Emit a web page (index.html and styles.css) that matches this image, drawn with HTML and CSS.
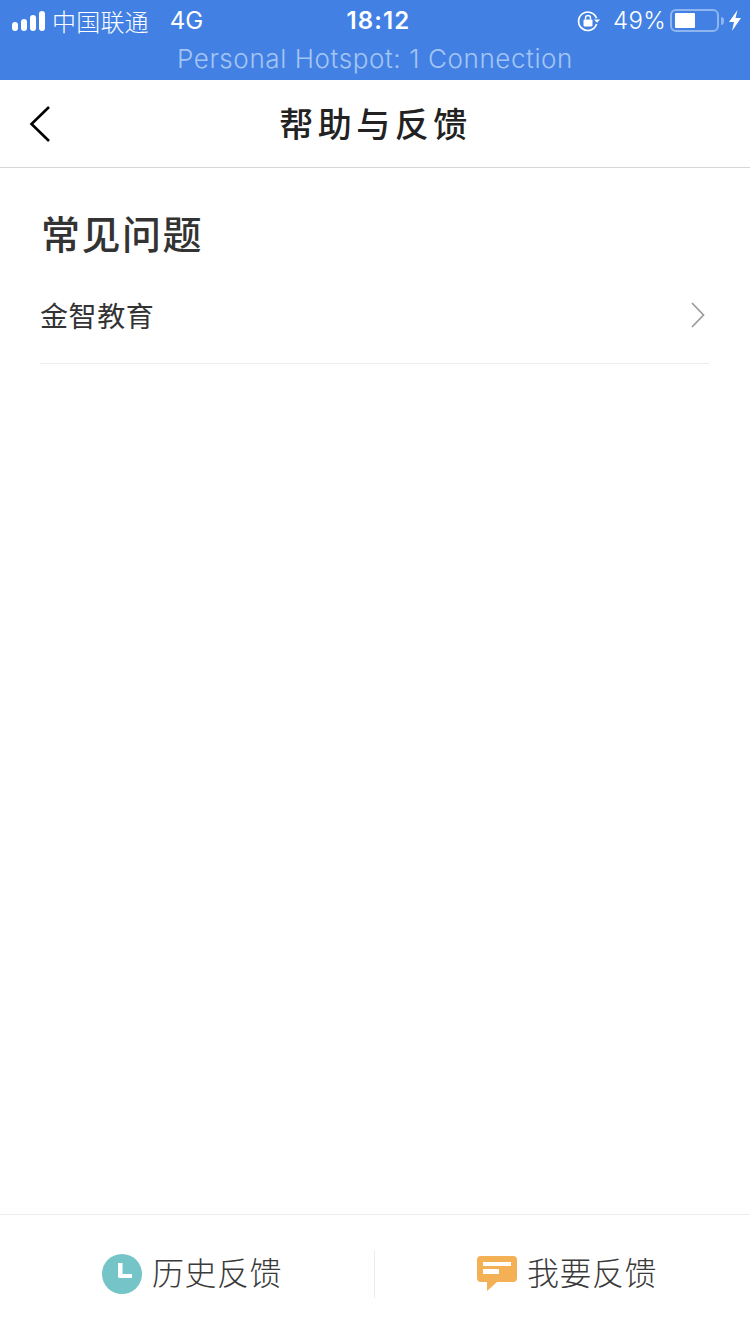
FILE: index.html
```html
<!DOCTYPE html>
<html lang="zh-CN">
<head>
<meta charset="utf-8">
<title>帮助与反馈</title>
<link rel="stylesheet" href="styles.css">
</head>
<body>
<div class="page">
  <header class="top">
    <div class="status">
      <div class="status-left">
        <div class="signal"><i class="b1"></i><i class="b2"></i><i class="b3"></i><i class="b4"></i></div>
        <span class="carrier">中国联通</span>
        <span class="net">4G</span>
      </div>
      <div class="time">18:12</div>
      <div class="status-right">
        <svg class="lock" width="24" height="22" viewBox="0 0 24 22">
          <path d="M19.500 8.200A9.200 9.200 0 1 0 19.600 14" fill="none" stroke="#fff" stroke-width="1.700"/>
          <path d="M17 9.500h6l-3 3.200z" fill="#fff"/>
          <rect x="6.500" y="9.500" width="9" height="7" rx="1" fill="#fff"/>
          <path d="M8.500 9.500V8a2.500 2.500 0 0 1 5 0v1.500" fill="none" stroke="#fff" stroke-width="1.400"/>
        </svg>
        <span class="pct">49%</span>
        <div class="battery"><div class="battery-fill"></div></div>
        <div class="battery-cap"></div>
        <svg class="bolt" width="12" height="21" viewBox="0 0 12 21"><path d="M8.500 0 0 12h5L3 21l9-13H6.500z" fill="#fff"/></svg>
      </div>
    </div>
    <div class="hotspot">Personal Hotspot: 1 Connection</div>
  </header>

  <nav class="nav">
    <svg class="back" width="24" height="38" viewBox="0 0 24 38"><path d="M21 2 3.500 19 21 36" fill="none" stroke="#000" stroke-width="2.600"/></svg>
    <h1 class="title">帮助与反馈</h1>
  </nav>

  <main class="content">
    <h2 class="heading">常见问题</h2>
    <div class="row">
      <span class="row-label">金智教育</span>
      <svg class="chev" width="16" height="26" viewBox="0 0 16 26"><path d="M3 1 14.500 13 3 25" fill="none" stroke="#9a9a9a" stroke-width="1.700"/></svg>
    </div>
  </main>

  <footer class="footer">
    <div class="action action-first">
      <svg width="40" height="40" viewBox="0 0 40 40"><circle cx="20" cy="20" r="20" fill="#75c5c8"/><path d="M16 9h4.500v11H30v4H17.500a1.500 1.500 0 0 1-1.500-1.500z" fill="#fff"/></svg>
      <span class="action-label">历史反馈</span>
    </div>
    <div class="action action-second">
      <svg width="40" height="36" viewBox="0 0 40 36"><path d="M4 0h32a4 4 0 0 1 4 4v18a4 4 0 0 1-4 4H20L10 35v-9H4a4 4 0 0 1-4-4V4a4 4 0 0 1 4-4z" fill="#f4b054"/><rect x="6" y="6" width="28" height="4" fill="#fff"/><rect x="6" y="13" width="16" height="5" fill="#fff"/></svg>
      <span class="action-label">我要反馈</span>
    </div>
  </footer>
</div>
</body>
</html>
```

FILE: styles.css
```css
* { box-sizing: border-box; }
html, body { margin: 0; padding: 0; background: #fff; }
body { font-family: "Liberation Sans", "Noto Sans CJK SC", sans-serif; }
.page { width: 750px; height: 1334px; display: flex; flex-direction: column; overflow: hidden; }

.top { background: #4281e3; height: 80px; flex: none; }
.status { height: 40px; padding: 1px 9px 0 12px; display: grid; grid-template-columns: 1fr auto 1fr; align-items: center; color: #fff; font-family: Inter, "Noto Sans CJK SC", sans-serif; }
.status-left { display: flex; align-items: center; }
.signal { display: flex; align-items: flex-end; gap: 3px; width: 33px; height: 20px; }
.signal i { display: block; width: 6px; background: #fff; border-radius: 3px; }
.b1 { height: 9px; } .b2 { height: 12px; } .b3 { height: 16px; } .b4 { height: 20px; }
.carrier { margin-left: 7px; font-size: 24px; font-family: "Noto Sans CJK SC", sans-serif; font-weight: 300; letter-spacing: 0.200px; }
.net { margin-left: 21px; font-size: 24px; font-weight: 400; }
.time { font-size: 24px; font-weight: 600; letter-spacing: 1.100px; padding-left: 4px; }
.status-right { display: flex; align-items: center; justify-content: flex-end; }
.lock { margin-right: 12px; }
.pct { font-size: 24px; font-weight: 300; margin-right: 4px; letter-spacing: 0.300px; }
.battery { width: 49px; height: 23px; border: 2px solid #8fb5ee; border-radius: 6px; padding: 2px; }
.battery-fill { width: 20px; height: 15px; background: #fff; border-radius: 1px; margin: 0 0 0 1px; }
.battery-cap { width: 3px; height: 8px; margin: 0 5px 0 2px; background: #8fb5ee; border-radius: 0 4px 4px 0; }
.hotspot { height: 40px; display: flex; align-items: center; justify-content: center; font-family: Inter, sans-serif; font-size: 26px; font-weight: 300; color: #a5c5f3; padding-bottom: 3px; letter-spacing: 0.600px; }

.nav { height: 88px; flex: none; position: relative; display: flex; align-items: center; justify-content: center; border-bottom: 1px solid #d6d6d6; }
.back { position: absolute; left: 28px; top: 25px; }
.title { margin: 0; font-family: "Noto Sans CJK SC", sans-serif; font-size: 34px; font-weight: 500; letter-spacing: 4.500px; color: #222; padding: 0 0 2px 1px; }

.content { flex: 1; padding: 0 41px 0 40px; }
.heading { margin: 36px 0 0 1px; font-family: "Noto Sans CJK SC", sans-serif; font-size: 39px; line-height: 56px; font-weight: 500; letter-spacing: 1.500px; color: #333; }
.row { height: 80px; margin-top: 24px; display: flex; align-items: center; justify-content: space-between; border-bottom: 1px solid #ececec; padding: 0 4px 17px 0; }
.row-label { font-family: "Noto Sans CJK SC", sans-serif; font-size: 28px; font-weight: 400; color: #333; letter-spacing: 0.600px; }

.footer { height: 120px; flex: none; border-top: 1px solid #ececec; display: flex; padding-top: 35px; align-items: flex-start; }
.action { height: 48px; display: flex; align-items: center; justify-content: center; gap: 10px; font-family: "Noto Sans CJK SC", sans-serif; }
.action-first { flex: 0 0 374px; padding-left: 10px; }
.action-second { flex: 0 0 376px; border-left: 1px solid #ececec; padding-left: 9px; }
.action-label { font-size: 32px; font-weight: 300; color: #3a3a3a; letter-spacing: 0.500px; margin-top: -6px; }
```
